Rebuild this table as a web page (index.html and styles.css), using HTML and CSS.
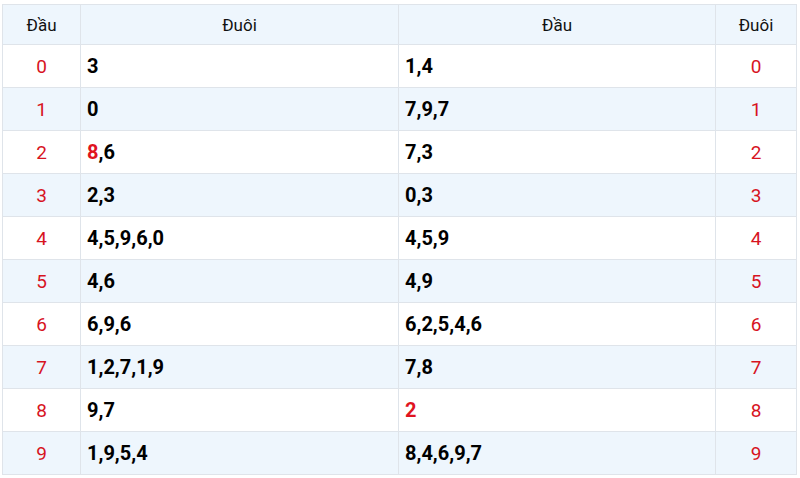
FILE: index.html
```html
<!DOCTYPE html>
<html>
<head>
<meta charset="utf-8">
<link rel="stylesheet" href="styles.css">
</head>
<body>
<table class="lo">
  <colgroup>
    <col class="c-num"><col class="c-val"><col class="c-val2"><col class="c-num2">
  </colgroup>
  <thead>
    <tr><th>Đầu</th><th>Đuôi</th><th>Đầu</th><th>Đuôi</th></tr>
  </thead>
  <tbody>
    <tr><td class="n">0</td><td class="v">3</td><td class="v">1,4</td><td class="n">0</td></tr>
    <tr><td class="n">1</td><td class="v">0</td><td class="v">7,9,7</td><td class="n">1</td></tr>
    <tr><td class="n">2</td><td class="v"><span class="hl">8</span>,6</td><td class="v">7,3</td><td class="n">2</td></tr>
    <tr><td class="n">3</td><td class="v">2,3</td><td class="v">0,3</td><td class="n">3</td></tr>
    <tr><td class="n">4</td><td class="v">4,5,9,6,0</td><td class="v">4,5,9</td><td class="n">4</td></tr>
    <tr><td class="n">5</td><td class="v">4,6</td><td class="v">4,9</td><td class="n">5</td></tr>
    <tr><td class="n">6</td><td class="v">6,9,6</td><td class="v">6,2,5,4,6</td><td class="n">6</td></tr>
    <tr><td class="n">7</td><td class="v">1,2,7,1,9</td><td class="v">7,8</td><td class="n">7</td></tr>
    <tr><td class="n">8</td><td class="v">9,7</td><td class="v"><span class="hl">2</span></td><td class="n">8</td></tr>
    <tr><td class="n">9</td><td class="v">1,9,5,4</td><td class="v">8,4,6,9,7</td><td class="n">9</td></tr>
  </tbody>
</table>
</body>
</html>
```
FILE: styles.css
```css
html, body {
  margin: 0;
  padding: 0;
  background: #ffffff;
}
body {
  padding: 4px 0 0 2px;
  font-family: Roboto, "Liberation Sans", sans-serif;
}
.lo {
  border-collapse: collapse;
  width: 794px;
  table-layout: fixed;
}
.c-num { width: 78px; }
.c-val { width: 318px; }
.c-val2 { width: 317px; }
.c-num2 { width: 81px; }
.lo th, .lo td {
  border: 1px solid #dfe4ea;
  padding: 0;
}
.lo thead tr {
  background: #eef6fd;
  height: 40px;
}
.lo th {
  font-weight: 400;
  font-size: 17px;
  color: #111;
  text-align: center;
}
.lo tbody tr {
  height: 43px;
}
.lo tbody tr:nth-child(even) {
  background: #eef6fd;
}
.n {
  text-align: center;
  color: #d7141f;
  font-size: 19px;
}
.v {
  text-align: left;
  padding-left: 6px !important;
  font-weight: 700;
  font-size: 20px;
  color: #000;
}
.hl {
  color: #e0141f;
}
```
